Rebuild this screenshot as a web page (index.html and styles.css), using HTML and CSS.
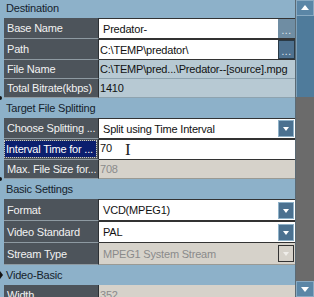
FILE: index.html
```html
<!DOCTYPE html>
<html lang="en">
<head>
  <meta charset="UTF-8">
  <title>Properties</title>
  <link rel="stylesheet" href="styles.css">
</head>
<body>
  <div class="grid">
    <div class="sheet">
      <div class="cat first">Destination</div>
      <div class="prop">
        <div class="name">Base Name</div>
        <div class="val edit"><span class="txt pad">Predator-</span><span class="btn light">...</span></div>
      </div>
      <div class="prop">
        <div class="name">Path</div>
        <div class="val edit"><span class="txt">C:\TEMP\predator\</span><span class="btn boxed">...</span></div>
      </div>
      <div class="prop short">
        <div class="name">File Name</div>
        <div class="val info">C:\TEMP\pred...\Predator--[source].mpg</div>
      </div>
      <div class="prop short">
        <div class="name">Total Bitrate(kbps)</div>
        <div class="val info">1410</div>
      </div>

      <div class="cat mark-top">Target File Splitting</div>
      <div class="prop">
        <div class="name">Choose Splitting ...</div>
        <div class="val edit"><span class="txt pad">Split using Time Interval</span><span class="drop"></span></div>
      </div>
      <div class="prop">
        <div class="name focus"><span>Interval Time for ...</span></div>
        <div class="val edit top"><span class="txt">70</span><span class="ibeam">I</span></div>
      </div>
      <div class="prop short">
        <div class="name">Max. File Size for...</div>
        <div class="val off">708</div>
      </div>

      <div class="cat mark-top">Basic Settings</div>
      <div class="prop tall">
        <div class="name">Format</div>
        <div class="val edit"><span class="txt pad">VCD(MPEG1)</span><span class="drop"></span></div>
      </div>
      <div class="prop tall">
        <div class="name">Video Standard</div>
        <div class="val edit"><span class="txt pad">PAL</span><span class="drop"></span></div>
      </div>
      <div class="prop tall">
        <div class="name">Stream Type</div>
        <div class="val off"><span class="txt pad">MPEG1 System Stream</span><span class="drop dim"></span></div>
      </div>

      <div class="cat mark-mid">Video-Basic</div>
      <div class="prop">
        <div class="name">Width</div>
        <div class="val off">352</div>
      </div>
    </div>

    <div class="scroll">
      <div class="arrow up"></div>
      <div class="thumb"></div>
      <div class="track"></div>
      <div class="arrow down"></div>
    </div>
  </div>
</body>
</html>
```

FILE: styles.css
```css
body {
  margin: 0;
  width: 314px;
  height: 297px;
  overflow: hidden;
  font-family: "Liberation Sans", Arial, sans-serif;
  font-size: 11px;
  letter-spacing: -0.2px;
  background: #6b6b6b;
}
.grid {
  display: flex;
  height: 297px;
}
.sheet {
  width: 296px;
  background: #8db1c9;
  border-right: 1px solid #5b6a74;
  box-sizing: border-box;
  overflow: hidden;
}
.cat {
  position: relative;
  height: 20px;
  line-height: 20px;
  padding-left: 6px;
  color: #15222c;
}
.cat.first {
  height: 18px;
  line-height: 17px;
}
.cat.mark-top::before {
  content: "";
  position: absolute;
  left: -2px;
  top: -2px;
  width: 4px;
  height: 4px;
  border-radius: 50%;
  background: #111;
}
.cat.mark-mid::before {
  content: "";
  position: absolute;
  left: 0;
  top: 6px;
  border-left: 3px solid #111;
  border-top: 4px solid transparent;
  border-bottom: 4px solid transparent;
}
.prop {
  display: flex;
  height: 21px;
  margin-left: 4px;
}
.prop.short {
  height: 19px;
}
.prop.tall {
  height: 22px;
}
.name {
  width: 95px;
  flex: none;
  box-sizing: border-box;
  padding: 0 0 0 3px;
  display: flex;
  align-items: center;
  background: #4d545b;
  color: #f2f2f2;
  border-bottom: 1px solid #8e9aa2;
  border-right: 1px solid #2c3034;
  white-space: nowrap;
  overflow: hidden;
}
.name.focus {
  padding: 2px 2px 2px 1px;
}
.name.focus span {
  display: flex;
  align-items: center;
  height: 100%;
  width: 100%;
  padding-left: 1px;
  box-sizing: border-box;
  background: #0b1f6e;
  color: #fff;
  outline: 1px dotted #c8c8c8;
}
.val {
  flex: 1;
  display: flex;
  align-items: center;
  box-sizing: border-box;
  padding-left: 1px;
  white-space: nowrap;
  overflow: hidden;
  color: #111;
}
.val.top {
  align-items: flex-start;
  padding-top: 2px;
}
.val.edit {
  background: #fff;
  border-top: 1px solid #333;
  border-bottom: 1px solid #333;
}
.val.info {
  background: #b7c9d3;
  border-bottom: 1px solid #8ea3af;
}
.val.off {
  background: #d6d2ca;
  color: #8a8a8a;
  border-bottom: 1px solid #9a9a94;
}
.txt {
  flex: 1;
}
.txt.pad {
  padding-left: 3px;
}
.btn {
  width: 17px;
  height: 100%;
  flex: none;
  box-sizing: border-box;
  color: #e8eef2;
  font-size: 10px;
  line-height: 23px;
  text-align: center;
  letter-spacing: 0.5px;
}
.btn.light {
  background: #6f8da3;
}
.btn.boxed {
  background: #4f7290;
  border: 1px solid #2a3a46;
  line-height: 21px;
}
.drop {
  width: 16px;
  height: 17px;
  flex: none;
  margin-right: 1px;
  box-sizing: border-box;
  background: #4b7190;
  border: 1px solid #8fb2c9;
  position: relative;
}
.drop::after {
  content: "";
  position: absolute;
  left: 4px;
  top: 6px;
  border-top: 4px solid #fff;
  border-left: 3px solid transparent;
  border-right: 3px solid transparent;
}
.drop.dim {
  background: #d6d2ca;
  border-color: #333;
}
.drop.dim::after {
  border-top-color: #f0eeea;
}
.ibeam {
  position: absolute;
  left: 125px;
  top: 140px;
  font-family: "Liberation Serif", serif;
  font-size: 17px;
  line-height: 20px;
  color: #222;
}
.scroll {
  width: 18px;
  display: flex;
  flex-direction: column;
}
.arrow {
  height: 16px;
  flex: none;
  background: #5b86a6;
  border: 1px solid #89aac2;
  box-sizing: border-box;
  position: relative;
}
.arrow::after {
  content: "";
  position: absolute;
  left: 4px;
  border-left: 4px solid transparent;
  border-right: 4px solid transparent;
}
.arrow.up::after {
  top: 4px;
  border-bottom: 5px solid #fff;
}
.arrow.down::after {
  top: 5px;
  border-top: 5px solid #fff;
}
.thumb {
  height: 81px;
  flex: none;
  background: #4f7b9b;
  border-left: 1px solid #7ea0b8;
}
.track {
  flex: 1;
  background: #6b6b6b;
}
```
